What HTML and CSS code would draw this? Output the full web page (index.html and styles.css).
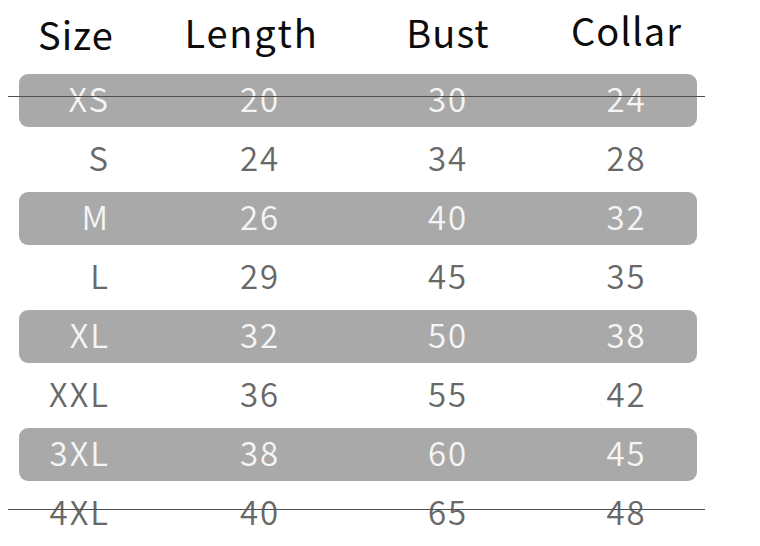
FILE: index.html
```html
<!DOCTYPE html>
<html lang="en">
<head>
<meta charset="utf-8">
<title>Size chart</title>
<link rel="stylesheet" href="styles.css">
</head>
<body>
<div class="chart">
  <div class="head">
    <div class="h h-size">Size</div>
    <div class="h h-length">Length</div>
    <div class="h h-bust">Bust</div>
    <div class="h h-collar">Collar</div>
  </div>
  <div class="rows">
    <div class="row shaded"><span class="c1">XS</span><span class="c2">20</span><span class="c3">30</span><span class="c4">24</span></div>
    <div class="row"><span class="c1">S</span><span class="c2">24</span><span class="c3">34</span><span class="c4">28</span></div>
    <div class="row shaded"><span class="c1">M</span><span class="c2">26</span><span class="c3">40</span><span class="c4">32</span></div>
    <div class="row"><span class="c1">L</span><span class="c2">29</span><span class="c3">45</span><span class="c4">35</span></div>
    <div class="row shaded"><span class="c1">XL</span><span class="c2">32</span><span class="c3">50</span><span class="c4">38</span></div>
    <div class="row"><span class="c1">XXL</span><span class="c2">36</span><span class="c3">55</span><span class="c4">42</span></div>
    <div class="row shaded"><span class="c1">3XL</span><span class="c2">38</span><span class="c3">60</span><span class="c4">45</span></div>
    <div class="row"><span class="c1">4XL</span><span class="c2">40</span><span class="c3">65</span><span class="c4">48</span></div>
  </div>
  <div class="rule rule-top"></div>
  <div class="rule rule-bottom"></div>
</div>
</body>
</html>
```
FILE: styles.css
```css
html, body {
  margin: 0;
  padding: 0;
  background: #ffffff;
}

body {
  width: 760px;
  height: 546px;
  overflow: hidden;
  font-family: "Noto Sans CJK SC", "Noto Sans", sans-serif;
}

.chart {
  position: relative;
  padding: 12px 0 0 19px;
}

.head {
  display: grid;
  grid-template-columns: 141px 200px 176px 161px;
  width: 678px;
  height: 42px;
  margin-bottom: 20px;
}

.h {
  font-size: 38px;
  line-height: 39px;
  color: #0c0c0c;
  letter-spacing: 1px;
  white-space: nowrap;
}

.h-size {
  padding-left: 19px;
  padding-top: 2px;
}

.h-length {
  text-align: center;
  padding-right: 17px;
  letter-spacing: 1.8px;
}

.h-bust {
  text-align: center;
}

.h-collar {
  text-align: center;
  padding-left: 20px;
  margin-top: -2px;
}

.rows {
  display: flex;
  flex-direction: column;
  gap: 6px;
  width: 678px;
}

.row {
  display: grid;
  grid-template-columns: 141px 200px 176px 161px;
  height: 53px;
  line-height: 48px;
  font-size: 33px;
  font-weight: 350;
  color: #686868;
  letter-spacing: 2px;
  border-radius: 9px;
}

.row.shaded {
  background: #a9a9a9;
  color: #f5f5f5;
}

.c1 {
  text-align: right;
  padding-right: 50px;
}

.c2, .c3 {
  text-align: center;
}

.c4 {
  text-align: center;
  padding-left: 20px;
}

.rule {
  position: absolute;
  left: 8px;
  width: 697px;
  height: 1px;
  background: #4f4f4f;
}

.rule-top {
  top: 96px;
}

.rule-bottom {
  top: 509px;
}
```
